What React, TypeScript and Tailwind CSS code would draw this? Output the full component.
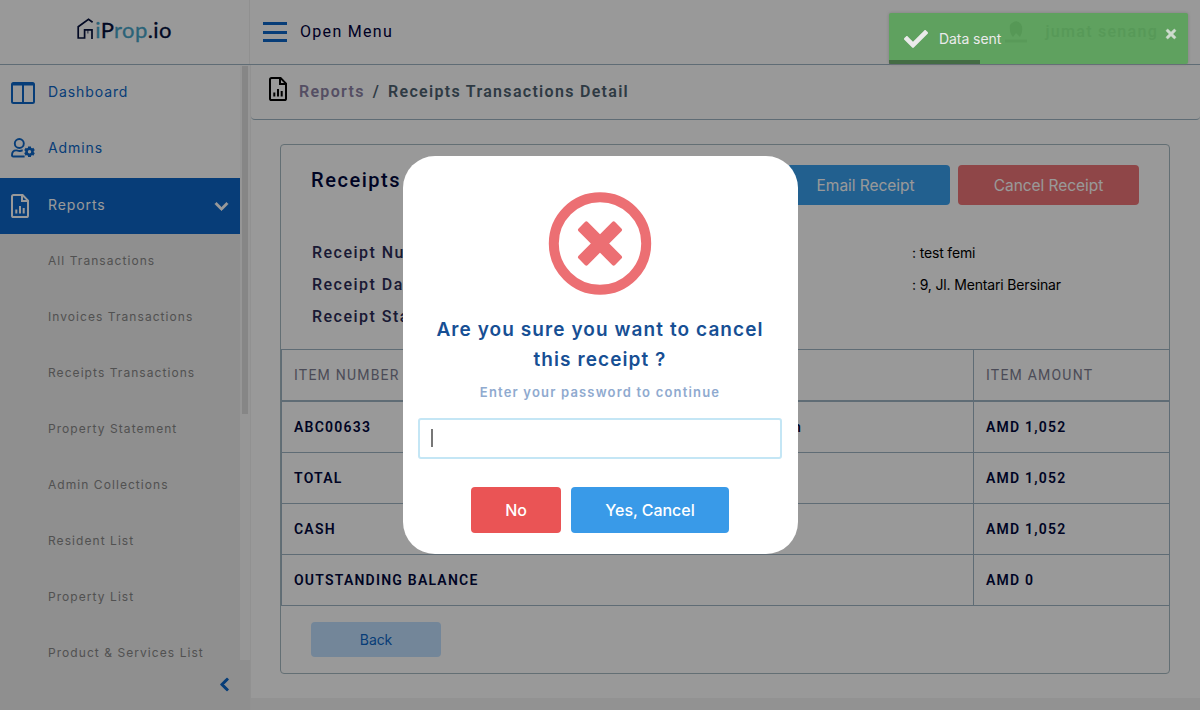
import React from "react";
import { FaCheck, FaChevronDown, FaChevronLeft, FaTimes } from "react-icons/fa";

const inter = "font-['Inter','Liberation_Sans',sans-serif]";
const roboto = "font-['Roboto','Liberation_Sans',sans-serif]";

const reportLinks = [
  "All Transactions",
  "Invoices Transactions",
  "Receipts Transactions",
  "Property Statement",
  "Admin Collections",
  "Resident List",
  "Property List",
  "Product & Services List",
];

const rows = [
  { item: "ABC00633", description: "Registration", amount: "AMD 1,052" },
  { item: "TOTAL", amount: "AMD 1,052" },
  { item: "CASH", amount: "AMD 1,052" },
  { item: "OUTSTANDING BALANCE", amount: "AMD 0" },
];

function FileChartIcon({ className }: { className?: string }) {
  return (
    <svg viewBox="0 0 18 24" width="18" height="24" fill="none" stroke="currentColor" className={className}>
      <path d="M2.600 1h9L17 6.600V21.400Q17 23 15.400 23H2.600Q1 23 1 21.400V2.600Q1 1 2.600 1Z" strokeWidth="2" />
      <path d="M11 1.500V7h5.500" strokeWidth="2" />
      <path d="M5.300 19.500v-4M9 19.500v-7.500M12.700 19.500v-5.500" strokeWidth="2" />
    </svg>
  );
}

function ColumnsIcon() {
  return (
    <svg viewBox="0 0 24 22" width="24" height="22" fill="none" stroke="currentColor" strokeWidth="2">
      <rect x="1" y="1" width="22" height="20" rx="1.500" />
      <path d="M1 2.200h22" strokeWidth="2.600" />
      <path d="M12 2v19" />
    </svg>
  );
}

function UserCogIcon() {
  return (
    <svg viewBox="0 0 24 20" width="24" height="20" fill="none" stroke="currentColor" strokeWidth="1.900">
      <circle cx="8.300" cy="5.500" r="4.500" />
      <path d="M13.600 18.500H2.200Q1 18.500 1 17.200C1 14 3 12.400 5.200 12.400c1.200 0 1.700.6 3.100.6s2-.6 3.400-.5" />
      <circle cx="18.500" cy="13.700" r="3" strokeWidth="2.600" />
      <path
        d="M18.500 8.400v2M18.500 17v2M13.900 11.050l1.800 1M21.300 15.350l1.800 1M13.900 16.350l1.800-1M21.300 12.050l1.800-1"
        strokeWidth="3"
      />
    </svg>
  );
}

function Logo() {
  return (
    <div className="flex items-start">
      <svg viewBox="0 0 18 22" width="18" height="22" fill="none" stroke="#04103c" strokeWidth="1.700">
        <path d="M15.600 4.300L11.500 1.300L1.200 8.700V20H7.600V11.900H15V20.900" />
        <path d="M10.800 11.900V15.500" strokeOpacity="0.500" />
      </svg>
      <span className="mt-[-1px] font-['Lato',sans-serif] text-[22px] leading-[26px] tracking-[0.400px] text-[#04103c] [-webkit-text-stroke:0.300px]">
        <span className="text-[#48a5c9]">i</span>P<span className="text-[#48a5c9]">rop</span>.io
      </span>
    </div>
  );
}

function Header() {
  return (
    <header className="flex h-[65px] shrink-0 border-b border-[#9fb5c3] bg-white">
      <div className="flex w-[250px] items-start justify-center border-r border-[#f0f0f0] pt-[18px]">
        <Logo />
      </div>
      <div className="flex flex-1 items-center pl-[13px] pr-[42px]">
        <div className="flex h-5 w-6 flex-col justify-between text-[#0d67c8]">
          <span className="h-[3px] bg-current" />
          <span className="h-[3px] bg-current" />
          <span className="h-[3px] bg-current" />
        </div>
        <span className={`${roboto} ml-[13px] text-[16px] tracking-[1.3px] text-[#00003c]`}>Open Menu</span>
        <svg viewBox="0 0 24 24" width="24" height="24" className="ml-auto mr-[18px]">
          <path d="M6 5Q12-2 17 4Q20 10 16 17L12 13L9 17Q5 13 6 5Z" fill="#b4b4b4" />
          <path d="M1 21H23" stroke="#cccccc" strokeWidth="3" />
        </svg>
        <span className={`${roboto} text-[16px] font-medium tracking-[1.280px] text-[#bdbdc4]`}>jumat senang</span>
      </div>
    </header>
  );
}

function Sidebar() {
  return (
    <aside className={`${inter} flex w-[251px] shrink-0 flex-col border-r border-[#f2f2f2] bg-[#eeeeee]`}>
      <div className="flex h-[595px] overflow-hidden">
        <nav className="w-[240px] text-[14px] tracking-[0.900px] text-[#0d67c8]">
          <a className="flex h-14 items-center bg-white pl-[11px]">
            <span className="w-[37px]"><ColumnsIcon /></span>
            <span className="pb-[3px]">Dashboard</span>
          </a>
          <a className="flex h-[57px] items-center bg-white pb-[3px] pl-[11px]">
            <span className="w-[37px]"><UserCogIcon /></span>
            <span className="pb-[2px]">Admins</span>
          </a>
          <a className="flex h-14 items-center bg-[#0d67c8] pl-[11px] pr-[11px] text-white">
            <span className="w-[37px]"><FileChartIcon /></span>
            <span className="pb-[3px]">Reports</span>
            <FaChevronDown size={15} className="ml-auto" stroke="currentColor" strokeWidth={24} />
          </a>
          {reportLinks.map((label) => (
            <a key={label} className="flex h-14 items-center pb-[3px] pl-12 text-[12px] tracking-[1.060px] text-[#888888]">
              {label}
            </a>
          ))}
        </nav>
        <div className="w-[10px] bg-[#fafafa] px-[2px] pt-px">
          <div className="h-[348px] bg-[#dfdfdf]" />
        </div>
      </div>
      <div className="flex justify-end pr-[18px] pt-[17px] text-[#0d67c8]">
        <FaChevronLeft size={15} stroke="currentColor" strokeWidth={32} />
      </div>
    </aside>
  );
}

function Breadcrumb() {
  return (
    <div
      className={`${roboto} flex h-[55px] items-start rounded-b-[4px] border-b border-[#9fb5c3] bg-white pl-[18px] pt-3 text-[16px] font-semibold tracking-[1.300px]`}
    >
      <FileChartIcon className="text-black" />
      <span className="ml-[12px] mt-[3px] text-[#8d83a6]">Reports</span>
      <span className="mx-[8px] mt-[3px] text-[#4e6271]">/</span>
      <span className="mt-[3px] text-[#4e6271]">Receipts Transactions Detail</span>
    </div>
  );
}

function ReceiptCard() {
  return (
    <section className="ml-[29px] mt-6 flex h-[530px] w-[890px] flex-col rounded-[4px] border border-[#a5b9c1] bg-white">
      <div className="flex h-[83px] items-start justify-between pl-[30px] pr-[30px] pt-5">
        <h1 className={`${roboto} text-[20px] font-medium tracking-[1.550px] text-[#00083c]`}>
          Receipts Transactions Detail
        </h1>
        <div className={`${inter} flex gap-2 text-[15.500px] tracking-[-0.050px] text-white`}>
          <button className="h-10 w-[169px] rounded-[4px] bg-[#3aa0ee] pt-[2px]">Email Receipt</button>
          <button className="h-10 w-[181px] rounded-[4px] bg-[#ee7678] pt-[2px]">Cancel Receipt</button>
        </div>
      </div>
      <div className="flex h-[121px] pl-[31px] pt-[9px]">
        <dl className={`${roboto} w-[600px] text-[16px] font-medium leading-8 tracking-[1.480px] text-[#2c2c58]`}>
          <dt>Receipt Number</dt>
          <dt>Receipt Date</dt>
          <dt>Receipt Status</dt>
        </dl>
        <div className={`${inter} text-[14px] leading-8 tracking-[-0.160px] text-black`}>
          <p>: test femi</p>
          <p>: 9, Jl. Mentari Bersinar</p>
        </div>
      </div>
      <table className={`${roboto} w-[888px] table-fixed border-collapse text-left text-[14px] tracking-[1.220px] text-[#00083c]`}>
        <colgroup>
          <col className="w-[346px]" />
          <col className="w-[346px]" />
          <col className="w-[196px]" />
        </colgroup>
        <thead>
          <tr className="h-[51px] border border-b-2 border-[#9fb5c3] text-[#7e7e92]">
            <th className="pl-3 pt-px font-normal">ITEM NUMBER</th>
            <th />
            <th className="border-l border-[#9fb5c3] pl-3 pt-px font-normal">ITEM AMOUNT</th>
          </tr>
        </thead>
        <tbody className="[&>tr:first-child>td]:pt-[2px]">
          {rows.map((row) => (
            <tr key={row.item} className="h-[51px] border border-[#9fb5c3] font-semibold first:h-[52px]">
              <td className="pl-3">{row.item}</td>
              <td className="pr-[171px] text-right">{row.description}</td>
              <td className="border-l border-[#9fb5c3] pl-3">{row.amount}</td>
            </tr>
          ))}
        </tbody>
      </table>
      <button className={`${inter} ml-[30px] mt-4 h-[35px] w-[130px] rounded-[4px] bg-[#c0e0ff] text-[14px] tracking-[-0.100px] text-[#0d67c8]`}>
        Back
      </button>
    </section>
  );
}

function ConfirmDialog() {
  return (
    <div
      className={`${inter} flex h-[398px] w-[395px] flex-col items-center rounded-[32px] bg-white px-[15px] pt-[35px]`}
    >
      <svg viewBox="0 0 104 104" width="104" height="104">
        <circle cx="52" cy="52.500" r="46.200" strokeWidth="10" fill="none" stroke="#ec6f73" />
        <rect x="26.200" y="46" width="51.600" height="13" rx="2" fill="#ec6f73" transform="rotate(45 52 52.500)" />
        <rect x="26.200" y="46" width="51.600" height="13" rx="2" fill="#ec6f73" transform="rotate(-45 52 52.500)" />
      </svg>
      <h2 className="mt-5 w-[360px] text-center text-[19px] font-semibold leading-[30px] tracking-[1.080px] text-[#174f94]">
        Are you sure you want to cancel this receipt ?
      </h2>
      <p className="mt-[7px] text-[13px] font-semibold leading-5 tracking-[1.180px] text-[#8faacf]">
        Enter your password to continue
      </p>
      <div className="mt-4 flex h-[41px] w-[364px] items-center rounded-[3px] border-2 border-[#c4e6f5] pb-px pl-[11px]">
        <span className="h-[18px] w-[2px] bg-[#777]" />
      </div>
      <div className="mt-7 flex gap-[10px] text-[16px] font-medium tracking-[-0.050px] text-white">
        <button className="h-[46px] w-[90px] rounded-[4px] bg-[#ea5455]">No</button>
        <button className="h-[46px] w-[158px] rounded-[4px] bg-[#399ae8]">Yes, Cancel</button>
      </div>
    </div>
  );
}

function Toast() {
  return (
    <div
      className={`${inter} absolute left-[889px] top-[13px] flex h-[51px] w-[299px] items-start rounded-[2px] bg-[#51a351] text-white opacity-80 shadow-[0_0_3px_#777]`}
    >
      <FaCheck size={24} className="ml-[15px] mt-[14px]" />
      <span className="ml-[11px] mt-[16px] text-[14px] leading-5 tracking-[-0.060px]">Data sent</span>
      <FaTimes size={14} className="ml-auto mr-[10px] mt-[14px] opacity-80" stroke="currentColor" strokeWidth={20} />
      <span className="absolute bottom-0 left-0 h-1 w-[91px] bg-black/40" />
    </div>
  );
}

export default function App() {
  return (
    <div className="relative h-[710px] w-[1200px] overflow-hidden bg-[#f3f3f3]">
      <div className="flex h-full flex-col">
        <Header />
        <div className="flex min-h-0 flex-1">
          <Sidebar />
          <main className="h-[633px] flex-1 bg-white">
            <Breadcrumb />
            <ReceiptCard />
          </main>
        </div>
      </div>
      <div className="absolute inset-0 flex items-center justify-center bg-black/40">
        <ConfirmDialog />
      </div>
      <Toast />
    </div>
  );
}
